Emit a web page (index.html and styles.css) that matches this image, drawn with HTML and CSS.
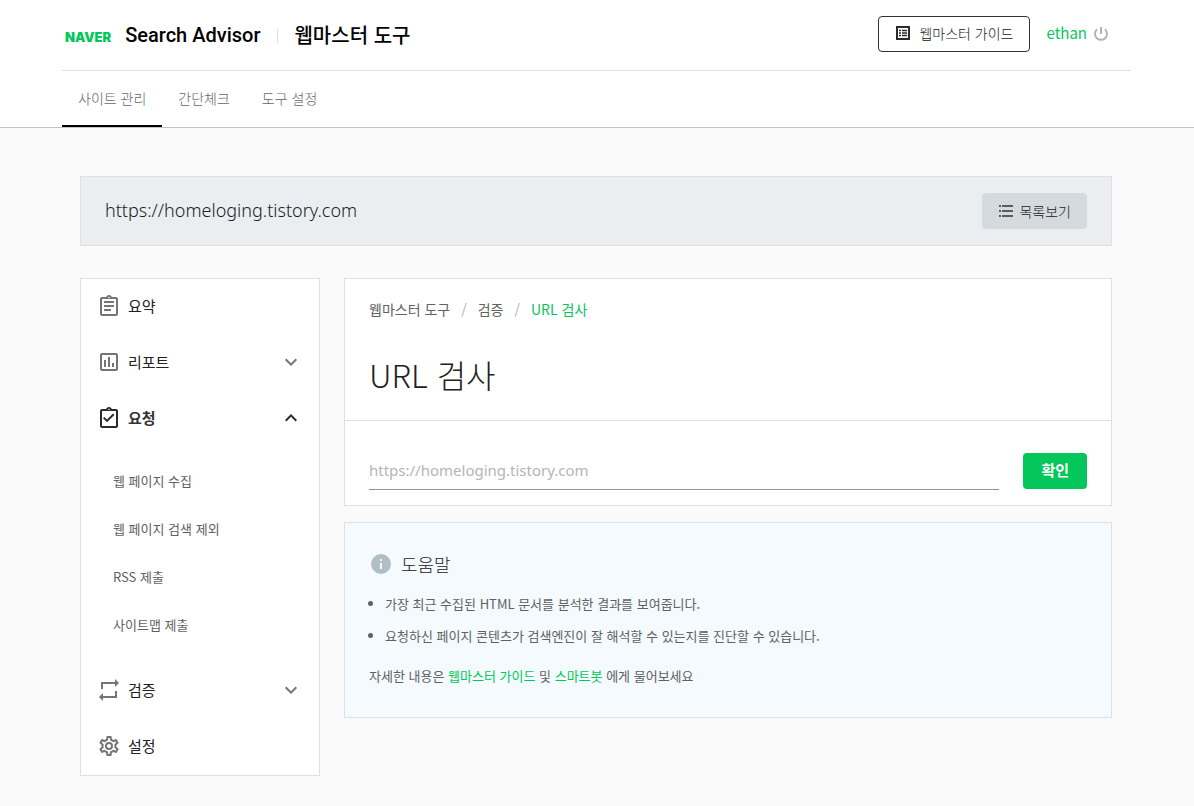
FILE: index.html
```html
<!DOCTYPE html>
<html lang="ko">
  <head>
    <meta charset="UTF-8" />
    <meta name="viewport" content="width=device-width, initial-scale=1.0" />
    <title>URL 검사</title>
    <link rel="stylesheet" href="styles.css">
  </head>
  <body>
    <header class="header">
      <div class="header-inner">
        <div class="topbar">
          <a class="brand" href="#">
            <span class="naver">NAVER</span>
            <span class="brand-name">Search Advisor</span>
          </a>
          <a class="service" href="#">웹마스터 도구</a>
          <div class="account">
            <a class="guide-button" href="#">
              <svg width="16" height="16" viewBox="0 0 16 16" fill="none" stroke="#2a2a2a">
                <path d="M2 2h12v12H2z" stroke-width="2" />
                <path d="M4 5.5h2M7 5.5h5M4 8h2M7 8h5M4 10.5h2M7 10.5h5" stroke-width="1.4" />
              </svg>
              웹마스터 가이드
            </a>
            <a class="user" href="#">ethan</a>
            <button class="power" aria-label="로그아웃">
              <svg width="16" height="16" viewBox="0 0 16 16" fill="none" stroke="#b4b4b4" stroke-width="2">
                <path d="M8 1v7" />
                <path d="M4.2 3.2a6 6 0 1 0 7.6 0" />
              </svg>
            </button>
          </div>
        </div>
        <nav class="tabs">
          <a class="tab active" href="#">사이트 관리</a>
          <a class="tab" href="#">간단체크</a>
          <a class="tab" href="#">도구 설정</a>
        </nav>
      </div>
    </header>

    <main class="page">
      <div class="site-bar">
        <span class="site-url">https://homeloging.tistory.com</span>
        <button class="list-button">
          <svg width="16" height="16" viewBox="0 0 16 16" stroke="#333" stroke-width="1.5">
            <path d="M1 3h2M4 3h11M1 8h2M4 8h11M1 13h2M4 13h11" />
          </svg>
          목록보기
        </button>
      </div>

      <div class="columns">
        <nav class="sidebar">
          <a class="menu-item" href="#">
            <svg class="menu-icon" viewBox="0 0 24 24">
              <path d="M7 15h7v2H7zm0-4h10v2H7zm0-4h10v2H7zm12-4h-4.18C14.4 1.84 13.3 1 12 1s-2.4.84-2.82 2H5c-1.1 0-2 .9-2 2v15c0 1.1.9 2 2 2h14c1.1 0 2-.9 2-2V5c0-1.1-.9-2-2-2zm-7-.25c.41 0 .75.34.75.75s-.34.75-.75.75-.75-.34-.75-.75.34-.75.75-.75zM19 20H5V5h14v15z" />
            </svg>
            요약
          </a>
          <button class="menu-item">
            <svg class="menu-icon" viewBox="0 0 24 24">
              <path d="M19 3H5c-1.1 0-2 .9-2 2v14c0 1.1.9 2 2 2h14c1.1 0 2-.9 2-2V5c0-1.1-.9-2-2-2zm0 16H5V5h14v14zM7 10h2v7H7zm4-3h2v10h-2zm4 6h2v4h-2z" />
            </svg>
            리포트
            <svg class="chevron" viewBox="0 0 24 24"><path d="M7.4 8.6 12 13.2l4.6-4.6L18 10l-6 6-6-6z" /></svg>
          </button>
          <button class="menu-item open">
            <svg class="menu-icon" viewBox="0 0 24 24">
              <path d="M19 3h-4.18C14.4 1.84 13.3 1 12 1s-2.4.84-2.82 2H5c-1.1 0-2 .9-2 2v15c0 1.1.9 2 2 2h14c1.1 0 2-.9 2-2V5c0-1.1-.9-2-2-2zm-7-.25c.41 0 .75.34.75.75s-.34.75-.75.75-.75-.34-.75-.75.34-.75.75-.75zM19 20H5V5h14v15zM17.4 8.9 16 7.5l-6 6-2.6-2.6L6 12.3l4 4z" />
            </svg>
            요청
            <svg class="chevron" viewBox="0 0 24 24"><path d="M7.4 15.4 12 10.8l4.6 4.6L18 14l-6-6-6 6z" /></svg>
          </button>
          <div class="submenu">
            <a class="submenu-item" href="#">웹 페이지 수집</a>
            <a class="submenu-item" href="#">웹 페이지 검색 제외</a>
            <a class="submenu-item" href="#">RSS 제출</a>
            <a class="submenu-item" href="#">사이트맵 제출</a>
          </div>
          <button class="menu-item">
            <svg class="menu-icon" viewBox="0 0 24 24">
              <path d="M4 11V4h14V1l4 4-4 4V6H6v5zM20 13v7H6v3l-4-4 4-4v3h12v-5z" />
            </svg>
            검증
            <svg class="chevron" viewBox="0 0 24 24"><path d="M7.4 8.6 12 13.2l4.6-4.6L18 10l-6 6-6-6z" /></svg>
          </button>
          <a class="menu-item" href="#">
            <svg class="menu-icon" viewBox="0 0 24 24">
              <path d="M19.43 12.98c.04-.32.07-.64.07-.98s-.03-.66-.07-.98l2.11-1.65c.19-.15.24-.42.12-.64l-2-3.46c-.12-.22-.39-.3-.61-.22l-2.49 1c-.52-.4-1.08-.73-1.69-.98l-.38-2.65C14.46 2.18 14.25 2 14 2h-4c-.25 0-.46.18-.49.42l-.38 2.65c-.61.25-1.17.59-1.69.98l-2.49-1c-.23-.09-.49 0-.61.22l-2 3.46c-.13.22-.07.49.12.64l2.11 1.65c-.04.32-.07.65-.07.98s.03.66.07.98l-2.11 1.65c-.19.15-.24.42-.12.64l2 3.46c.12.22.39.3.61.22l2.49-1c.52.4 1.08.73 1.69.98l.38 2.65c.03.24.24.42.49.42h4c.25 0 .46-.18.49-.42l.38-2.65c.61-.25 1.17-.59 1.69-.98l2.49 1c.23.09.49 0 .61-.22l2-3.46c.12-.22.07-.49-.12-.64zm-1.98-1.71c.04.31.05.52.05.73s-.02.43-.05.73l-.14 1.13.89.7 1.08.84-.7 1.21-1.27-.51-1.04-.42-.9.68c-.43.32-.84.56-1.25.73l-1.06.43-.16 1.13-.2 1.35h-1.4l-.19-1.35-.16-1.13-1.06-.43c-.43-.18-.83-.41-1.23-.71l-.91-.7-1.06.43-1.27.51-.7-1.21 1.08-.84.89-.7-.14-1.13c-.03-.31-.05-.54-.05-.74s.02-.43.05-.73l.14-1.13-.89-.7-1.08-.84.7-1.21 1.27.51 1.04.42.9-.68c.43-.32.84-.56 1.25-.73l1.06-.43.16-1.13.2-1.35h1.39l.19 1.35.16 1.13 1.06.43c.43.18.83.41 1.23.71l.91.7 1.06-.43 1.27-.51.7 1.21-1.07.85-.89.7zM12 8a4 4 0 1 0 0 8 4 4 0 0 0 0-8zm0 6a2 2 0 1 1 0-4 2 2 0 0 1 0 4z" />
            </svg>
            설정
          </a>
        </nav>

        <div class="content">
          <section class="card">
            <div class="card-head">
              <nav class="breadcrumb">
                <a href="#">웹마스터 도구</a>
                <span class="slash">/</span>
                <a href="#">검증</a>
                <span class="slash">/</span>
                <a class="current" href="#">URL 검사</a>
              </nav>
              <h1 class="title">URL 검사</h1>
            </div>
            <form class="url-form">
              <input class="url-input" type="text" aria-label="URL" placeholder="https://homeloging.tistory.com" />
              <button class="submit" type="button">확인</button>
            </form>
          </section>

          <section class="help">
            <h2 class="help-title">
              <svg width="24" height="24" viewBox="0 0 24 24">
                <circle cx="12" cy="12" r="10" fill="#b0bec5" />
                <path d="M11 7h2v2h-2zM11 11h2v6h-2z" fill="#f4fafd" />
              </svg>
              도움말
            </h2>
            <ul class="help-list">
              <li>가장 최근 수집된 HTML 문서를 분석한 결과를 보여줍니다.</li>
              <li>요청하신 페이지 콘텐츠가 검색엔진이 잘 해석할 수 있는지를 진단할 수 있습니다.</li>
            </ul>
            <p class="help-more">자세한 내용은 <a href="#">웹마스터 가이드</a> 및 <a href="#">스마트봇</a> 에게 물어보세요</p>
          </section>
        </div>
      </div>
    </main>
  </body>
</html>
```

FILE: styles.css
```css
* {
  box-sizing: border-box;
}
body {
  margin: 0;
  background-color: #fafafa;
  color: #212121;
  font-family: "Noto Sans CJK KR", sans-serif;
  font-weight: 300;
  font-size: 14px;
  line-height: 24px;
}
a {
  color: inherit;
  text-decoration: none;
}
button {
  border: none;
  font: inherit;
  color: inherit;
  cursor: pointer;
}
svg {
  flex-shrink: 0;
}
.header {
  background-color: #fff;
  border-bottom: 1px solid #c4c4c4;
}
.header-inner {
  margin: 0 63px 0 62px;
}
.topbar {
  display: flex;
  align-items: center;
  height: 71px;
  padding: 0 22px 0 3px;
  border-bottom: 1px solid #e0e0e0;
}
.brand {
  display: flex;
  align-items: center;
  gap: 14px;
  color: #000;
}
.naver {
  padding-top: 3px;
  font-family: Inter, sans-serif;
  font-size: 13px;
  font-weight: 900;
  color: #03c75a;
}
.brand-name,
.service {
  font-size: 20px;
  font-weight: 500;
  color: #000;
}
.brand-name {
  font-family: Roboto, sans-serif;
}
.service {
  display: flex;
  align-items: center;
}
.service::before {
  content: "";
  height: 14px;
  margin: 2px 16px 0 17px;
  border-left: 1px solid #ddd;
}
.account {
  display: flex;
  align-items: center;
  margin-left: auto;
  padding-bottom: 2px;
}
.guide-button {
  display: flex;
  align-items: center;
  gap: 8px;
  height: 36px;
  padding: 0 16px 2px;
  border: 1px solid #333;
  border-radius: 4px;
}
.user {
  margin-left: 16px;
  padding-bottom: 2px;
  font-size: 15px;
  font-weight: 400;
  color: #03c75a;
}
.power {
  display: flex;
  margin-left: 6px;
  padding: 0;
  background: none;
}
.tabs {
  display: flex;
}
.tab {
  height: 56px;
  padding: 15px 16px;
  color: #666;
}
.tab.active {
  border-bottom: 2px solid #000;
}
.page {
  padding: 48px 82px 30px 80px;
}
.site-bar {
  display: flex;
  align-items: center;
  justify-content: space-between;
  height: 70px;
  padding: 0 24px;
  background-color: #ebeef1;
  border: 1px solid #dfe1e3;
}
.site-url {
  padding-bottom: 2px;
  font-family: "Noto Sans", sans-serif;
  font-size: 18px;
}
.list-button {
  display: flex;
  align-items: center;
  gap: 5px;
  height: 36px;
  padding: 0 16px 1px;
  border-radius: 4px;
  background-color: #d5dade;
}
.columns {
  display: grid;
  grid-template-columns: 240px 1fr;
  align-items: start;
  gap: 24px;
  margin-top: 32px;
}
.sidebar,
.card,
.help {
  background-color: #fff;
  border: 1px solid #e0e0e0;
}
.menu-item {
  display: flex;
  align-items: center;
  gap: 7px;
  width: 100%;
  height: 56px;
  padding: 0 16px 2px;
  background: none;
  font-size: 15px;
  font-weight: 400;
}
.menu-icon {
  width: 24px;
  height: 24px;
  fill: #757575;
}
.chevron {
  width: 24px;
  height: 24px;
  margin-left: auto;
  fill: #757575;
}
.menu-item.open {
  font-weight: 700;
  color: #333;
}
.open .menu-icon,
.open .chevron {
  fill: #2a2a2a;
}
.submenu {
  padding: 10px 0 14px;
}
.submenu-item {
  display: block;
  padding: 12px 32px;
  font-size: 13px;
  font-weight: 400;
  color: #616161;
}
.card-head {
  padding: 18px 24px 22px;
  border-bottom: 1px solid #e0e0e0;
}
.breadcrumb {
  display: flex;
  gap: 11px;
  font-weight: 400;
  color: #616161;
}
.slash {
  color: #b0b0b0;
}
.breadcrumb .current {
  color: #03c75a;
}
.title {
  margin: 29px 0 0;
  font-size: 32px;
  line-height: 48px;
  font-weight: 300;
}
.url-form {
  display: flex;
  align-items: flex-start;
  gap: 24px;
  padding: 32px 24px 15px;
}
.url-input {
  flex: 1;
  min-width: 0;
  height: 37px;
  padding: 0 0 2px;
  border: none;
  border-bottom: 1px solid #949494;
  outline: none;
  font-family: "Noto Sans", sans-serif;
  font-size: 15px;
}
.url-input::placeholder {
  color: #b5b5b5;
}
.submit {
  height: 36px;
  padding: 0 18px 2px;
  border-radius: 4px;
  background-color: #03c75a;
  color: #fff;
  font-size: 15px;
  font-weight: 700;
}
.help {
  margin-top: 16px;
  padding: 29px 24px 16px;
  background-color: #f4fafd;
  font-size: 13px;
  font-weight: 400;
  color: #616161;
}
.help-title {
  display: flex;
  align-items: center;
  gap: 8px;
  margin: 0;
  font-size: 18px;
  font-weight: 300;
  color: #212121;
}
.help-list {
  margin: 12px 0 0;
  padding-left: 16px;
  line-height: 32px;
}
.help-more {
  margin: 12px 0 13px;
}
.help-more a {
  color: #03c75a;
}
```
